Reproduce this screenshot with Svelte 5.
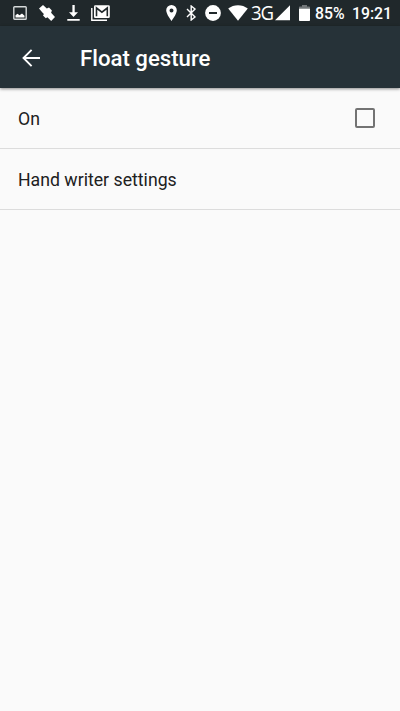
<script>
let enabled = false;
</script>

<div class="screen">
  <header class="status">
    <svg class="image" width="14" height="14" viewBox="0 0 14 14">
      <rect x="0.8" y="0.8" width="12.4" height="12.4" rx="0.8" fill="none" stroke="#d5d9da" stroke-width="1.4"/>
      <path d="M2.5 11.5V9.2L4.5 7.8 6.5 9.3 9 7.5 11.5 9.7V11.5Z"/>
    </svg>
    <svg class="satellite" width="16" height="16" viewBox="0 0 16 16">
      <path d="M0 3.6 4 0 7.8 3.4 10 2.6 12.9 5.6 12.1 7.8 16 12 12.2 16 8.4 12.2 6.8 13.2 4 10.6 4.9 9 3.4 7.6Z"/>
    </svg>
    <svg class="download" width="13" height="16" viewBox="0 0 13 16">
      <path d="M5.4 0H7.7V7.2H11L6.5 12 2 7.2H5.4ZM0.3 14H12.7V15.8H0.3Z"/>
    </svg>
    <svg class="mail" width="19" height="16" viewBox="0 0 19 16">
      <path d="M0.8 3V15.2H16" fill="none" stroke="#fff" stroke-width="1.4"/>
      <rect x="3" y="0.2" width="15.8" height="12.8" rx="1.3"/>
      <path d="M5.5 11.3V3L10.9 7.2 16.3 3V11.3" fill="none" stroke="#20282b" stroke-width="1.6"/>
    </svg>

    <div class="system">
      <svg class="pin" width="11" height="16" viewBox="0 0 11 16">
        <path fill-rule="evenodd" d="M5.5 0A5.3 5.3 0 0 0 0.2 5.3C0.2 9.3 5.5 16 5.5 16S10.8 9.3 10.8 5.3A5.3 5.3 0 0 0 5.5 0ZM5.5 3.4A2 2 0 1 1 5.5 7.4 2 2 0 0 1 5.5 3.4Z"/>
      </svg>
      <svg class="bluetooth" width="11" height="16" viewBox="0 0 11 16">
        <path d="M1 4 9 12 5.2 15V1L9 4 1 12" fill="none" stroke="#fff" stroke-width="1.4"/>
      </svg>
      <svg class="dnd" width="16" height="16" viewBox="0 0 16 16">
        <circle cx="8" cy="8" r="7.9"/>
        <path d="M4 7H12V9H4Z" fill="#20282b"/>
      </svg>
      <svg class="wifi" width="20" height="16" viewBox="0 0 20 16">
        <path d="M10 15.8 0.2 3.5C5.8-1 14.2-1 19.8 3.5Z"/>
      </svg>
      <span class="network">3G</span>
      <svg class="signal" width="15" height="16" viewBox="0 0 15 16">
        <path d="M0 15.3 15 0.3V15.3Z"/>
      </svg>
      <svg class="battery" width="11" height="16" viewBox="0 0 11 16">
        <path d="M3 0H8V1.5H10.2Q11 1.5 11 2.3V4H0V2.3Q0 1.5 0.8 1.5H3Z" fill="#727779"/>
        <path d="M0 3.7H11V15.2Q11 16 10.2 16H0.8Q0 16 0 15.2Z"/>
      </svg>
      <span class="percent">85%</span>
      <span class="clock">19:21</span>
    </div>
  </header>

  <nav class="toolbar">
    <button class="back" aria-label="Back">
      <svg width="18" height="18" viewBox="0 0 18 18">
        <path d="M9.6 0.9 1.5 9 9.6 17.1M1.7 9H18" fill="none" stroke="#fff" stroke-width="1.9"/>
      </svg>
    </button>
    <h1>Float gesture</h1>
  </nav>

  <main>
    <label class="row">
      <span>On</span>
      <input type="checkbox" bind:checked={enabled}/>
    </label>
    <div class="row">
      <span>Hand writer settings</span>
    </div>
  </main>
</div>

<style>
:global(body) {
  background: #fafafa;
}

.screen {
  height: 711px;
  overflow: hidden;
  font-family: Roboto, "Liberation Sans", sans-serif;
  color: #202020;
  background: #fafafa;
}

svg {
  display: block;
  flex: none;
  fill: #fff;
}

.status {
  display: flex;
  align-items: center;
  box-sizing: border-box;
  height: 26px;
  padding: 0 8px 0 13px;
  background: #20282b;
  color: #fff;
}

.satellite {
  margin-left: 12px;
}

.download {
  margin-left: 12px;
}

.mail {
  margin-left: 11px;
}

.system {
  display: flex;
  align-items: center;
  height: 26px;
  margin-left: 56px;
}

.bluetooth {
  margin-left: 9px;
}

.dnd {
  margin-left: 8px;
}

.wifi {
  margin-left: 7px;
}

.network {
  width: 24px;
  margin: 0 0 0 3px;
  font-family: "Open Sans", sans-serif;
  font-size: 20px;
  letter-spacing: -1.3px;
  line-height: 28px;
  transform: scaleX(0.93);
  transform-origin: left;
}

.battery {
  margin-left: 9px;
}

.percent {
  width: 37px;
  margin-left: 5px;
  font-size: 15.8px;
  font-weight: 500;
  line-height: 27px;
}

.clock {
  font-size: 15.8px;
  font-weight: 500;
  line-height: 27px;
}

.toolbar {
  position: relative;
  display: flex;
  align-items: center;
  box-sizing: border-box;
  height: 62px;
  padding-top: 2px;
  background: #263238;
  box-shadow: 0 1px 3px rgba(0, 0, 0, 0.45);
}

.back {
  width: 58px;
  height: 58px;
  padding: 0 0 0 22px;
  border: 0;
  background: none;
}

h1 {
  margin: 0 0 0 22px;
  color: #fff;
  font-size: 22.2px;
  font-weight: 500;
  line-height: 28px;
}

.row {
  display: flex;
  align-items: center;
  justify-content: space-between;
  box-sizing: border-box;
  height: 61px;
  padding: 0 25px 0 18px;
  border-bottom: 1px solid #dcdcdc;
  font-size: 17.7px;
}

.row span {
  padding-top: 2px;
}

input {
  appearance: none;
  box-sizing: border-box;
  width: 20px;
  height: 20px;
  margin: 0;
  border: 2px solid #737373;
  border-radius: 2px;
}
</style>
